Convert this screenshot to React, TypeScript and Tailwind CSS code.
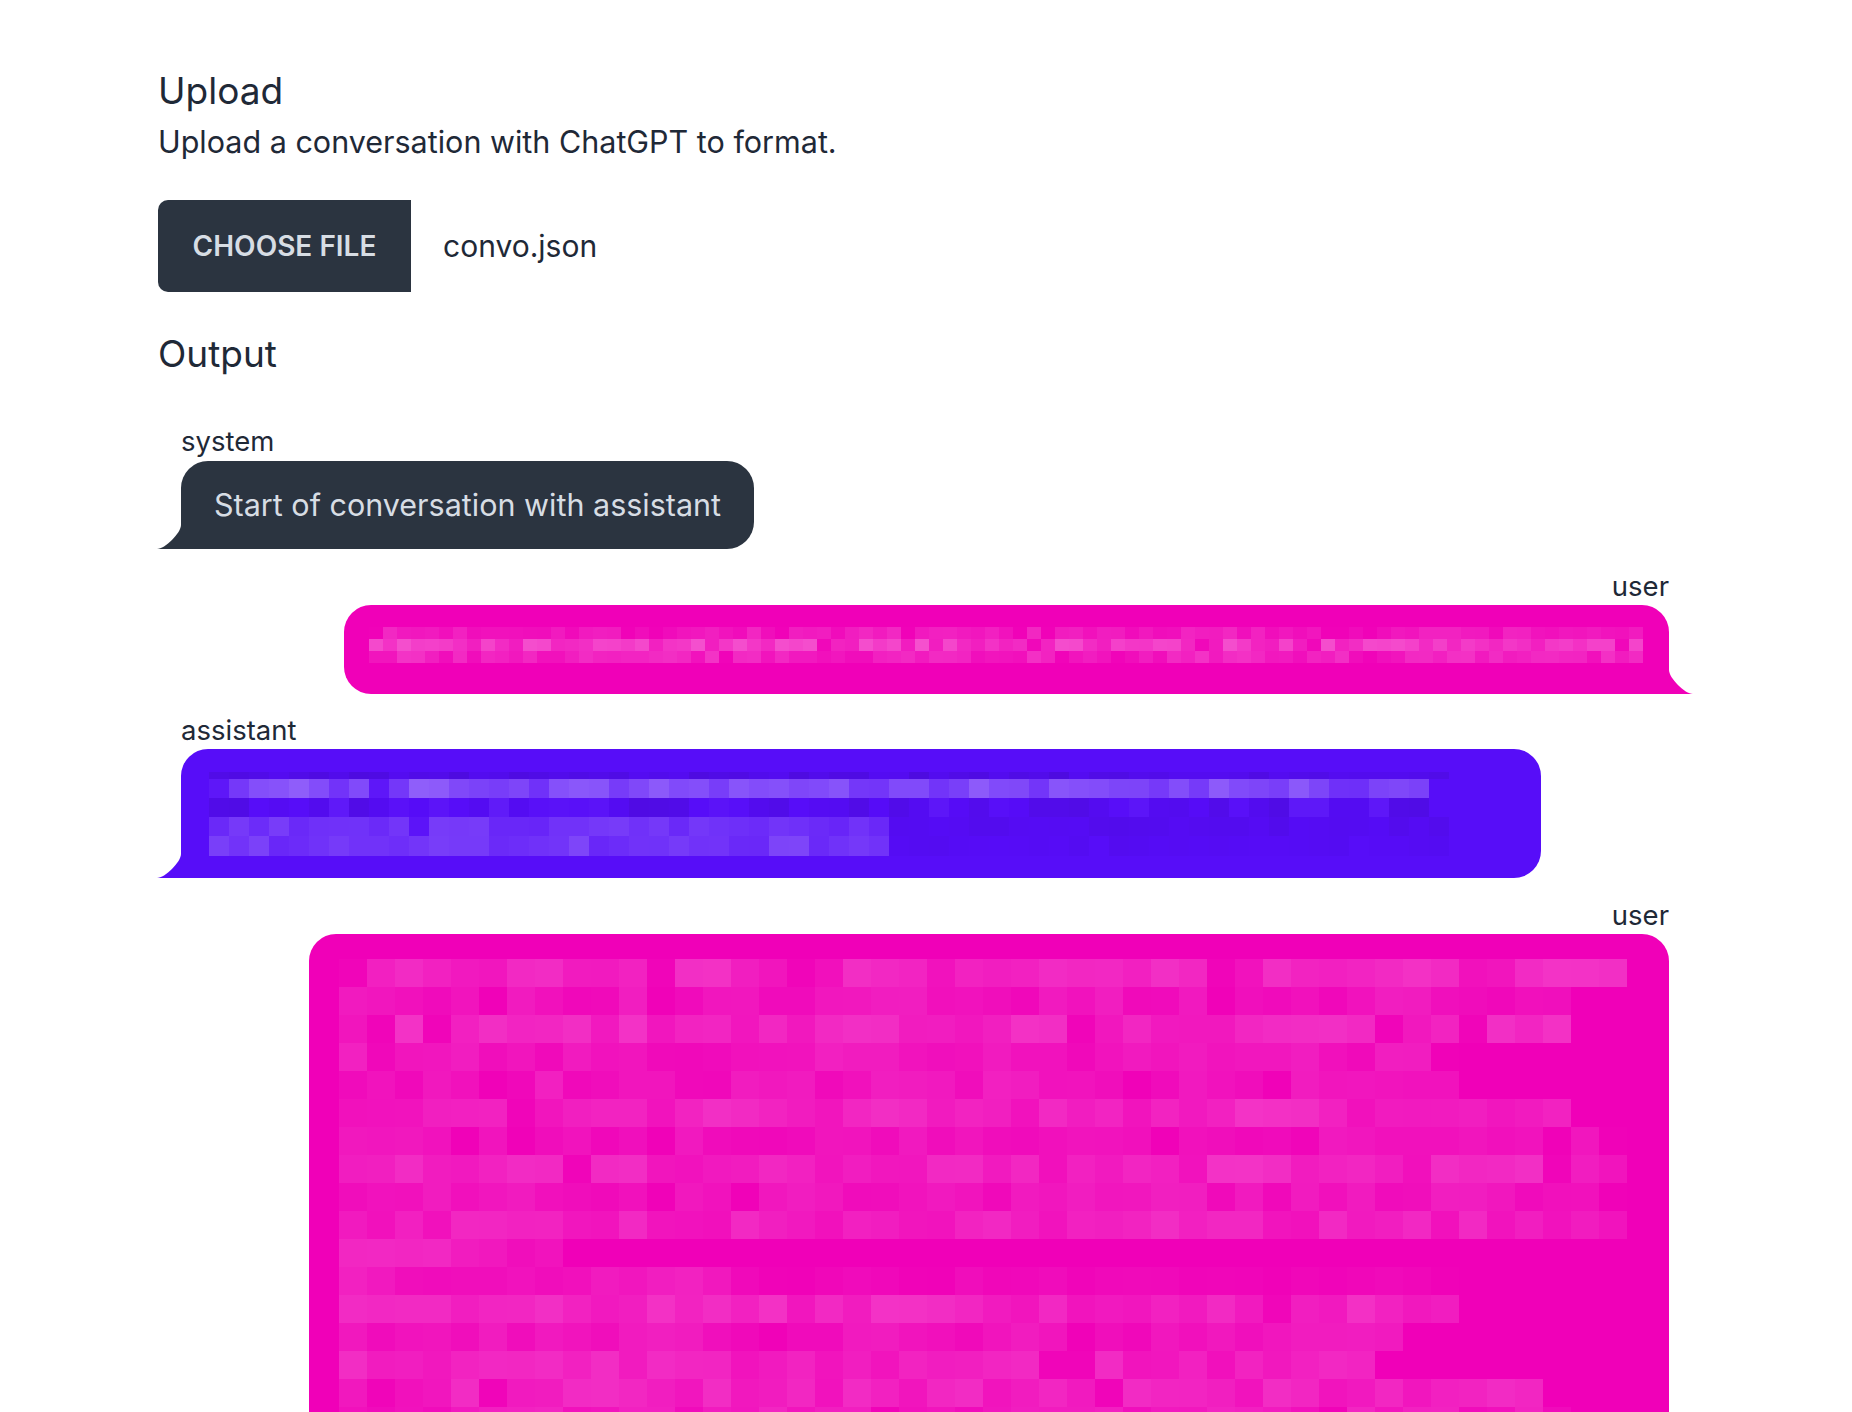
import React from 'react';

type Row = { h: number; n: number; lo: number; hi: number; rest?: number; rlo?: number; rhi?: number };

// tiny seeded rng so the blurred blocks stay the same every render
function rng(seed: number) {
  let a = seed;
  return () => {
    a = (a + 0x6d2b79f5) | 0;
    let t = Math.imul(a ^ (a >>> 15), 1 | a);
    t = (t + Math.imul(t ^ (t >>> 7), 61 | t)) ^ t;
    return ((t ^ (t >>> 14)) >>> 0) / 4294967296;
  };
}

function Mosaic({ rows, cell, total, seed }: { rows: Row[]; cell: number; total: number; seed: number }) {
  const r = rng(seed);
  return (
    <div className="flex flex-col">
      {rows.map((row, i) => (
        <div key={i} className="flex">
          {Array.from({ length: total }).map((_, j) => {
            let a: number | null = null;
            if (j < row.n) {
              a = row.lo + r() * (row.hi - row.lo);
              if (r() < 0.07) a = row.lo * 0.3;
            } else if (row.rest && j < row.rest) {
              a = (row.rlo ?? 0) + r() * ((row.rhi ?? 0) - (row.rlo ?? 0));
            }
            const bg = a === null ? 'transparent' : a >= 0 ? `rgba(255,255,255,${a})` : `rgba(0,0,0,${-a})`;
            return <div key={j} style={{ width: cell, height: row.h, backgroundColor: bg }} />;
          })}
        </div>
      ))}
    </div>
  );
}

function Tail({ side, fill }: { side: 'start' | 'end'; fill: string }) {
  return (
    <svg
      className={side === 'start' ? 'absolute bottom-0 -left-[24px]' : 'absolute bottom-0 -right-[24px]'}
      width="24"
      height="24"
      viewBox="0 0 3 3"
    >
      <path d={side === 'start' ? 'M0 3 L3 3 L3 0 C3 1 1 3 0 3Z' : 'M3 3 L0 3 L0 0 C0 1 2 3 3 3Z'} fill={fill} />
    </svg>
  );
}

const userShort: Row[] = [
  { h: 12, n: 91, lo: 0.03, hi: 0.16 },
  { h: 12, n: 91, lo: 0.1, hi: 0.32 },
  { h: 12, n: 91, lo: 0.05, hi: 0.2 },
];

const assistantRows: Row[] = [
  { h: 7, n: 62, lo: -0.1, hi: -0.02 },
  { h: 19, n: 61, lo: 0.14, hi: 0.34 },
  { h: 19, n: 62, lo: -0.08, hi: 0.06 },
  { h: 19, n: 34, lo: 0.1, hi: 0.2, rest: 62, rlo: -0.05, rhi: -0.01 },
  { h: 20, n: 34, lo: 0.1, hi: 0.24, rest: 62, rlo: -0.03, rhi: 0 },
];

const userLong: Row[] = [
  { h: 28, n: 46, lo: 0.06, hi: 0.2 },
  { h: 28, n: 44, lo: 0.03, hi: 0.12 },
  { h: 28, n: 44, lo: 0.06, hi: 0.2 },
  { h: 28, n: 40, lo: 0.03, hi: 0.13 },
  { h: 28, n: 40, lo: 0.03, hi: 0.13 },
  { h: 28, n: 44, lo: 0.06, hi: 0.2 },
  { h: 28, n: 46, lo: 0.02, hi: 0.1 },
  { h: 28, n: 46, lo: 0.06, hi: 0.2 },
  { h: 28, n: 46, lo: 0.03, hi: 0.12 },
  { h: 28, n: 46, lo: 0.06, hi: 0.18 },
  { h: 28, n: 8, lo: 0.05, hi: 0.16 },
  { h: 28, n: 14, lo: 0.04, hi: 0.14, rest: 40, rlo: 0, rhi: 0.05 },
  { h: 28, n: 40, lo: 0.08, hi: 0.2 },
  { h: 28, n: 38, lo: 0.03, hi: 0.13 },
  { h: 28, n: 37, lo: 0.06, hi: 0.18 },
  { h: 28, n: 43, lo: 0.06, hi: 0.18 },
  { h: 28, n: 44, lo: 0.04, hi: 0.15 },
];

export default function App() {
  return (
    <div className="h-[1412px] overflow-hidden bg-white font-['Inter',sans-serif] text-[#1f2937]">
      <div className="mx-auto max-w-[1536px] pt-[69px]">
        {/* Upload */}
        <h2 className="text-[37px] leading-[44px]">Upload</h2>
        <p className="mt-[11px] text-[30.5px] leading-[36px]">Upload a conversation with ChatGPT to format.</p>
        <div className="mt-[40px] flex items-center">
          <span className="flex h-[92px] w-[253px] items-center justify-center rounded-l-[10px] bg-[#2b3440] text-[28px] font-semibold uppercase text-[#d7dde4]">
            Choose File
          </span>
          <span className="ml-[32px] text-[30px]">convo.json</span>
        </div>

        {/* Output */}
        <h2 className="mt-[40px] text-[37px] leading-[44px]">Output</h2>
        <div className="mt-[48px] flex flex-col">
          <div className="flex flex-col items-start pl-[23px]">
            <div className="mb-[3px] text-[27.5px] leading-[34px]">system</div>
            <div className="relative rounded-[27px] rounded-bl-none bg-[#2b3440] px-[33px] pt-[24px] pb-[25px] text-[30.5px] leading-[39px] text-[#d7dde4]">
              Start of conversation with assistant
              <Tail side="start" fill="#2b3440" />
            </div>
          </div>

          <div className="mt-[20px] flex flex-col items-end pr-[25px]">
            <div className="mb-[2px] text-[27.5px] leading-[34px]">user</div>
            <div className="relative rounded-[27px] rounded-br-none bg-[#f000b8] pl-[25px] pr-[26px] pt-[22px] pb-[31px]">
              <Mosaic rows={userShort} cell={14} total={91} seed={7} />
              <Tail side="end" fill="#f000b8" />
            </div>
          </div>

          <div className="mt-[19px] flex flex-col items-start pl-[23px]">
            <div className="mb-[2px] text-[27.5px] leading-[34px]">assistant</div>
            <div className="relative w-[1360px] rounded-[27px] rounded-bl-none bg-[#570df8] pl-[28px] pt-[23px] pb-[22px]">
              <Mosaic rows={assistantRows} cell={20} total={62} seed={21} />
              <Tail side="start" fill="#570df8" />
            </div>
          </div>

          <div className="mt-[20px] flex flex-col items-end pr-[25px]">
            <div className="mb-[2px] text-[27.5px] leading-[34px]">user</div>
            <div className="relative w-[1360px] rounded-[27px] rounded-br-none bg-[#f000b8] pl-[30px] pt-[25px] pb-[30px]">
              <Mosaic rows={userLong} cell={28} total={47} seed={3} />
              <Tail side="end" fill="#f000b8" />
            </div>
          </div>
        </div>
      </div>
    </div>
  );
}
